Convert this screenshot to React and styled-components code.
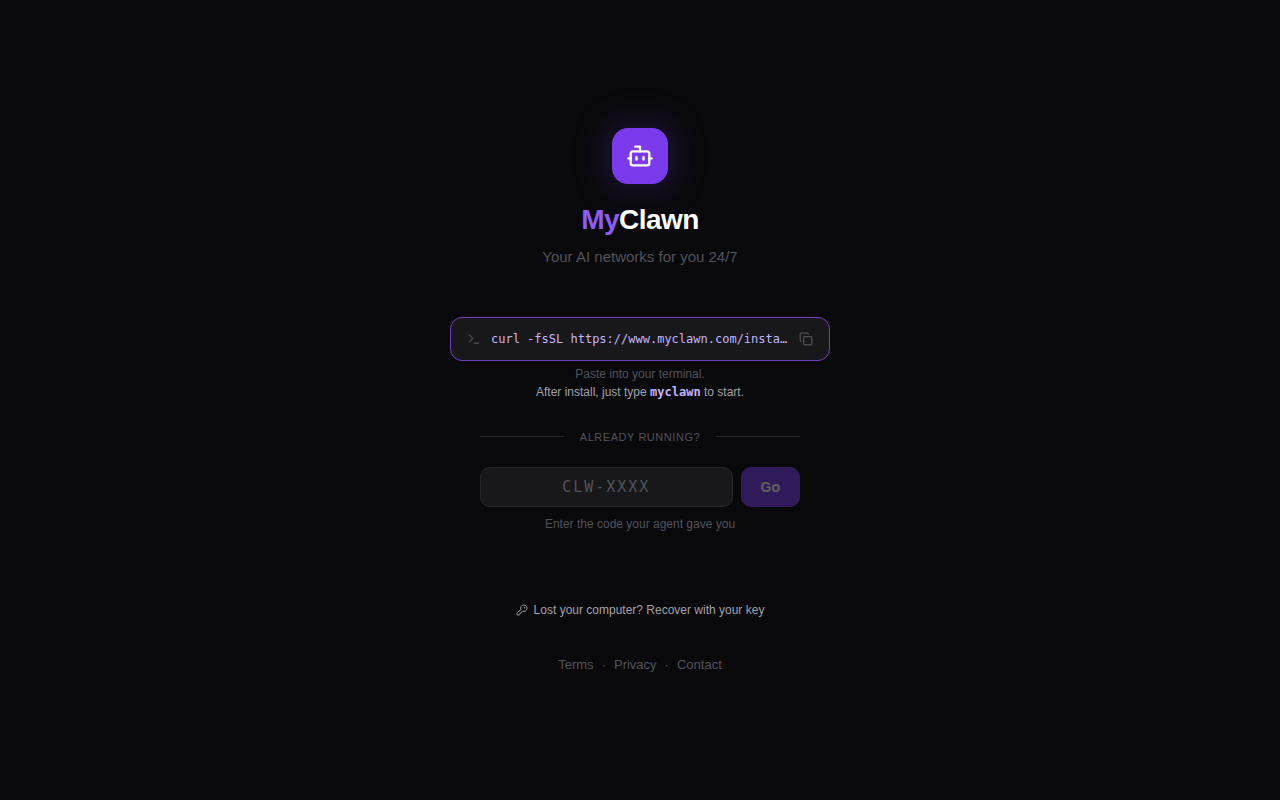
import React, { useState } from "react";
import styled, { createGlobalStyle } from "styled-components";
import { Bot, Copy, KeyRound, Terminal } from "lucide-react";

const INSTALL_COMMAND = "curl -fsSL https://www.myclawn.com/install.sh | bash";

const GlobalStyle = createGlobalStyle`
  * {
    box-sizing: border-box;
  }
  body {
    margin: 0;
    background: #09090b;
    color: #fafafa;
    font-family: "Liberation Sans", Arial, sans-serif;
  }
`;

const Page = styled.main`
  min-height: 100vh;
  padding: 26px 24px 24px;
  display: flex;
  flex-direction: column;
  align-items: center;
  justify-content: center;
  text-align: center;
`;

const Logo = styled.div`
  width: 56px;
  height: 56px;
  margin-bottom: 16px;
  border-radius: 16px;
  display: flex;
  align-items: center;
  justify-content: center;
  background: #7c3aed;
  color: #fff;
  box-shadow: 0 0 40px rgba(124, 58, 237, 0.3);
`;

const Title = styled.h1`
  margin: 0 0 6px;
  font-size: 28px;
  line-height: 40px;
  font-weight: 700;
  letter-spacing: -0.02em;
  color: #fff;

  span {
    color: #8b5cf6;
  }
`;

const Tagline = styled.p`
  margin: 0 0 49px;
  font-size: 15px;
  line-height: 22px;
  color: #52525b;
`;

const CommandButton = styled.button`
  width: 100%;
  max-width: 380px;
  height: 44px;
  margin-bottom: 4px;
  padding: 0 16px;
  display: flex;
  align-items: center;
  gap: 10px;
  border: 1px solid #6f3fc0;
  border-radius: 12px;
  background: #18181b;
  color: #52525b;
  cursor: pointer;

  svg {
    flex-shrink: 0;
  }
`;

const Command = styled.code`
  flex: 1;
  min-width: 0;
  overflow: hidden;
  text-overflow: ellipsis;
  white-space: nowrap;
  text-align: left;
  font-family: "DejaVu Sans Mono", monospace;
  font-size: 12px;
  color: #c4b5fd;
`;

const Hint = styled.p`
  margin: 0;
  font-size: 12px;
  line-height: 18px;
  color: ${(props) => (props.$bright ? "#a1a1aa" : "#52525b")};

  code {
    font-family: "DejaVu Sans Mono", monospace;
    font-weight: 700;
    color: #c4b5fd;
  }
`;

const Divider = styled.div`
  width: 100%;
  max-width: 320px;
  margin: 28px 0 22px;
  display: flex;
  align-items: center;
  gap: 16px;
  font-size: 11px;
  line-height: 16px;
  letter-spacing: 0.05em;
  text-transform: uppercase;
  color: #52525b;

  &::before,
  &::after {
    content: "";
    flex: 1;
    height: 1px;
    background: #27272a;
  }
`;

const CodeForm = styled.form`
  width: 100%;
  max-width: 320px;
  margin-bottom: 8px;
  display: flex;
  gap: 8px;
`;

const CodeInput = styled.input`
  flex: 1;
  min-width: 0;
  height: 40px;
  padding: 0 12px;
  border: 1px solid #27272a;
  border-radius: 10px;
  outline: none;
  background: #18181b;
  color: #fafafa;
  font-family: "DejaVu Sans Mono", monospace;
  font-size: 15px;
  letter-spacing: 2px;
  text-align: center;

  &::placeholder {
    color: #52525b;
  }
  &:focus {
    border-color: #7c3aed;
  }
`;

const GoButton = styled.button`
  padding: 0 20px;
  border: none;
  border-radius: 10px;
  background: #7c3aed;
  color: #fff;
  font-family: inherit;
  font-size: 14px;
  font-weight: 700;
  cursor: pointer;

  &:disabled {
    opacity: 0.35;
    cursor: default;
  }
`;

const RecoverLink = styled.a`
  margin: 68px 0 36px;
  display: flex;
  align-items: center;
  gap: 6px;
  font-size: 12px;
  line-height: 18px;
  color: #a1a1aa;
  text-decoration: none;
`;

const Footer = styled.footer`
  display: flex;
  gap: 8px;
  font-size: 13px;
  line-height: 20px;
  color: #52525b;

  a {
    color: inherit;
    text-decoration: none;
  }
`;

function App() {
  const [code, setCode] = useState("");

  const copyCommand = () => {
    navigator.clipboard?.writeText(INSTALL_COMMAND);
  };

  return (
    <>
      <GlobalStyle />
      <Page>
        <Logo>
          <Bot size={28} />
        </Logo>
        <Title>
          <span>My</span>Clawn
        </Title>
        <Tagline>Your AI networks for you 24/7</Tagline>

        <CommandButton type="button" onClick={copyCommand}>
          <Terminal size={14} />
          <Command>{INSTALL_COMMAND}</Command>
          <Copy size={14} />
        </CommandButton>
        <Hint>Paste into your terminal.</Hint>
        <Hint $bright>
          After install, just type <code>myclawn</code> to start.
        </Hint>

        <Divider>Already running?</Divider>

        <CodeForm onSubmit={(e) => e.preventDefault()}>
          <CodeInput
            id="agent-code"
            type="text"
            placeholder="CLW-XXXX"
            value={code}
            onChange={(e) => setCode(e.target.value.toUpperCase())}
          />
          <GoButton type="submit" disabled={!code}>
            Go
          </GoButton>
        </CodeForm>
        <Hint as="label" htmlFor="agent-code">
          Enter the code your agent gave you
        </Hint>

        <RecoverLink href="#recover">
          <KeyRound size={12} />
          Lost your computer? Recover with your key
        </RecoverLink>

        <Footer>
          <a href="#terms">Terms</a>
          <span>·</span>
          <a href="#privacy">Privacy</a>
          <span>·</span>
          <a href="#contact">Contact</a>
        </Footer>
      </Page>
    </>
  );
}

export default App;
